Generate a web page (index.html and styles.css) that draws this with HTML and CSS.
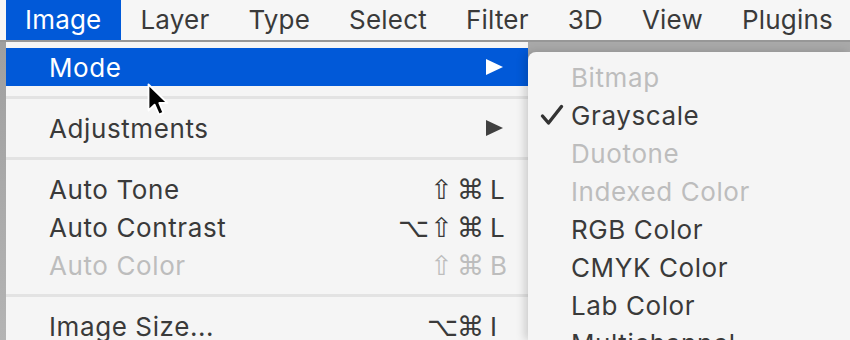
FILE: index.html
```html
<!DOCTYPE html>
<html lang="en">
<head>
    <meta charset="UTF-8">
    <title>Image menu</title>
    <link rel="stylesheet" href="styles.css">
</head>
<body>
    <div class="menubar">
        <div class="bar-item active">Image</div>
        <div class="bar-item">Layer</div>
        <div class="bar-item">Type</div>
        <div class="bar-item">Select</div>
        <div class="bar-item">Filter</div>
        <div class="bar-item">3D</div>
        <div class="bar-item">View</div>
        <div class="bar-item">Plugins</div>
    </div>
    <div class="screen">
        <div class="backdrop"></div>
        <div class="menu">
            <div class="row selected">
                <span class="label">Mode</span>
                <span class="arrow"></span>
            </div>
            <div class="sep"></div>
            <div class="row">
                <span class="label">Adjustments</span>
                <span class="arrow"></span>
            </div>
            <div class="sep"></div>
            <div class="row">
                <span class="label">Auto Tone</span>
                <span class="mod">⇧</span><span class="mod">⌘</span><span class="key">L</span>
            </div>
            <div class="row">
                <span class="label">Auto Contrast</span>
                <span class="mod">⌥</span><span class="mod">⇧</span><span class="mod">⌘</span><span class="key">L</span>
            </div>
            <div class="row disabled">
                <span class="label">Auto Color</span>
                <span class="mod">⇧</span><span class="mod">⌘</span><span class="key">B</span>
            </div>
            <div class="sep"></div>
            <div class="row">
                <span class="label">Image Size...</span>
                <span class="mod">⌥</span><span class="mod">⌘</span><span class="key">I</span>
            </div>
        </div>
        <div class="submenu">
            <div class="sub-row disabled"><span class="check"></span>Bitmap</div>
            <div class="sub-row">
                <span class="check">
                    <svg width="24" height="22" viewBox="0 0 24 22"><path d="M2.5 12 L8.5 19 L21.5 2.5" fill="none" stroke="#333" stroke-width="3.4" stroke-linecap="round" stroke-linejoin="round"/></svg>
                </span>Grayscale
            </div>
            <div class="sub-row disabled"><span class="check"></span>Duotone</div>
            <div class="sub-row disabled"><span class="check"></span>Indexed Color</div>
            <div class="sub-row"><span class="check"></span>RGB Color</div>
            <div class="sub-row"><span class="check"></span>CMYK Color</div>
            <div class="sub-row"><span class="check"></span>Lab Color</div>
            <div class="sub-row"><span class="check"></span>Multichannel</div>
        </div>
        <svg class="cursor" width="24" height="34" viewBox="0 0 24 34">
            <path d="M1.5 1.5 L1.5 27.5 L7.6 21.6 L12 31.5 L16.4 29.6 L12.2 20 L20.5 20 Z" fill="#000" stroke="#fff" stroke-width="1.8" stroke-linejoin="round"/>
        </svg>
    </div>
</body>
</html>
```

FILE: styles.css
```css
body {
    margin: 0;
    background-color: #a9a9a9;
    font-family: Inter, "Noto Sans", sans-serif;
    font-size: 26px;
    letter-spacing: 0.6px;
    color: #3a3a3a;
    overflow: hidden;
}
.menubar {
    display: flex;
    height: 40px;
    padding-left: 6px;
    background-color: #f6f6f6;
    border-bottom: 2px solid #979797;
    letter-spacing: 0.2px;
}
.bar-item {
    padding: 0 20px 0 19px;
    line-height: 40px;
}
.bar-item.active {
    background-color: #0159d8;
    color: #fff;
}
.screen {
    position: relative;
    display: flex;
    height: 298px;
}
.backdrop {
    width: 6px;
    background: linear-gradient(#9f9f9f, #b4b4b4);
}
.menu {
    width: 522px;
    padding-top: 6px;
    background-color: #f5f5f5;
}
.row {
    display: flex;
    align-items: center;
    height: 38px;
    padding: 0 22px 0 43px;
}
.row.selected {
    background-color: #0159d8;
    color: #fff;
}
.row.disabled {
    color: #bdbdbd;
}
.label {
    flex: 1;
}
.arrow {
    width: 0;
    height: 0;
    margin-right: 3px;
    border-top: 8px solid transparent;
    border-bottom: 8px solid transparent;
    border-left: 17px solid #404040;
}
.selected .arrow {
    border-left-color: #fff;
}
.mod {
    width: 29px;
    text-align: center;
    font-family: "DejaVu Sans", sans-serif;
    font-size: 27px;
    letter-spacing: 0;
}
.key {
    width: 16px;
    margin-left: 5px;
    letter-spacing: 0;
}
.sep {
    height: 3px;
    margin: 10px 0;
    background-color: #e3e3e3;
}
.submenu {
    flex: 1;
    margin-top: 10px;
    padding-top: 6px;
    background-color: #f5f5f5;
    border-top-left-radius: 8px;
    box-shadow: -3px 0 10px rgba(0, 0, 0, 0.18);
}
.sub-row {
    display: flex;
    align-items: center;
    height: 38px;
}
.sub-row.disabled {
    color: #bdbdbd;
}
.check {
    display: flex;
    justify-content: flex-end;
    width: 36px;
    margin-right: 7px;
}
.cursor {
    position: absolute;
    left: 147px;
    top: 41px;
}
```
